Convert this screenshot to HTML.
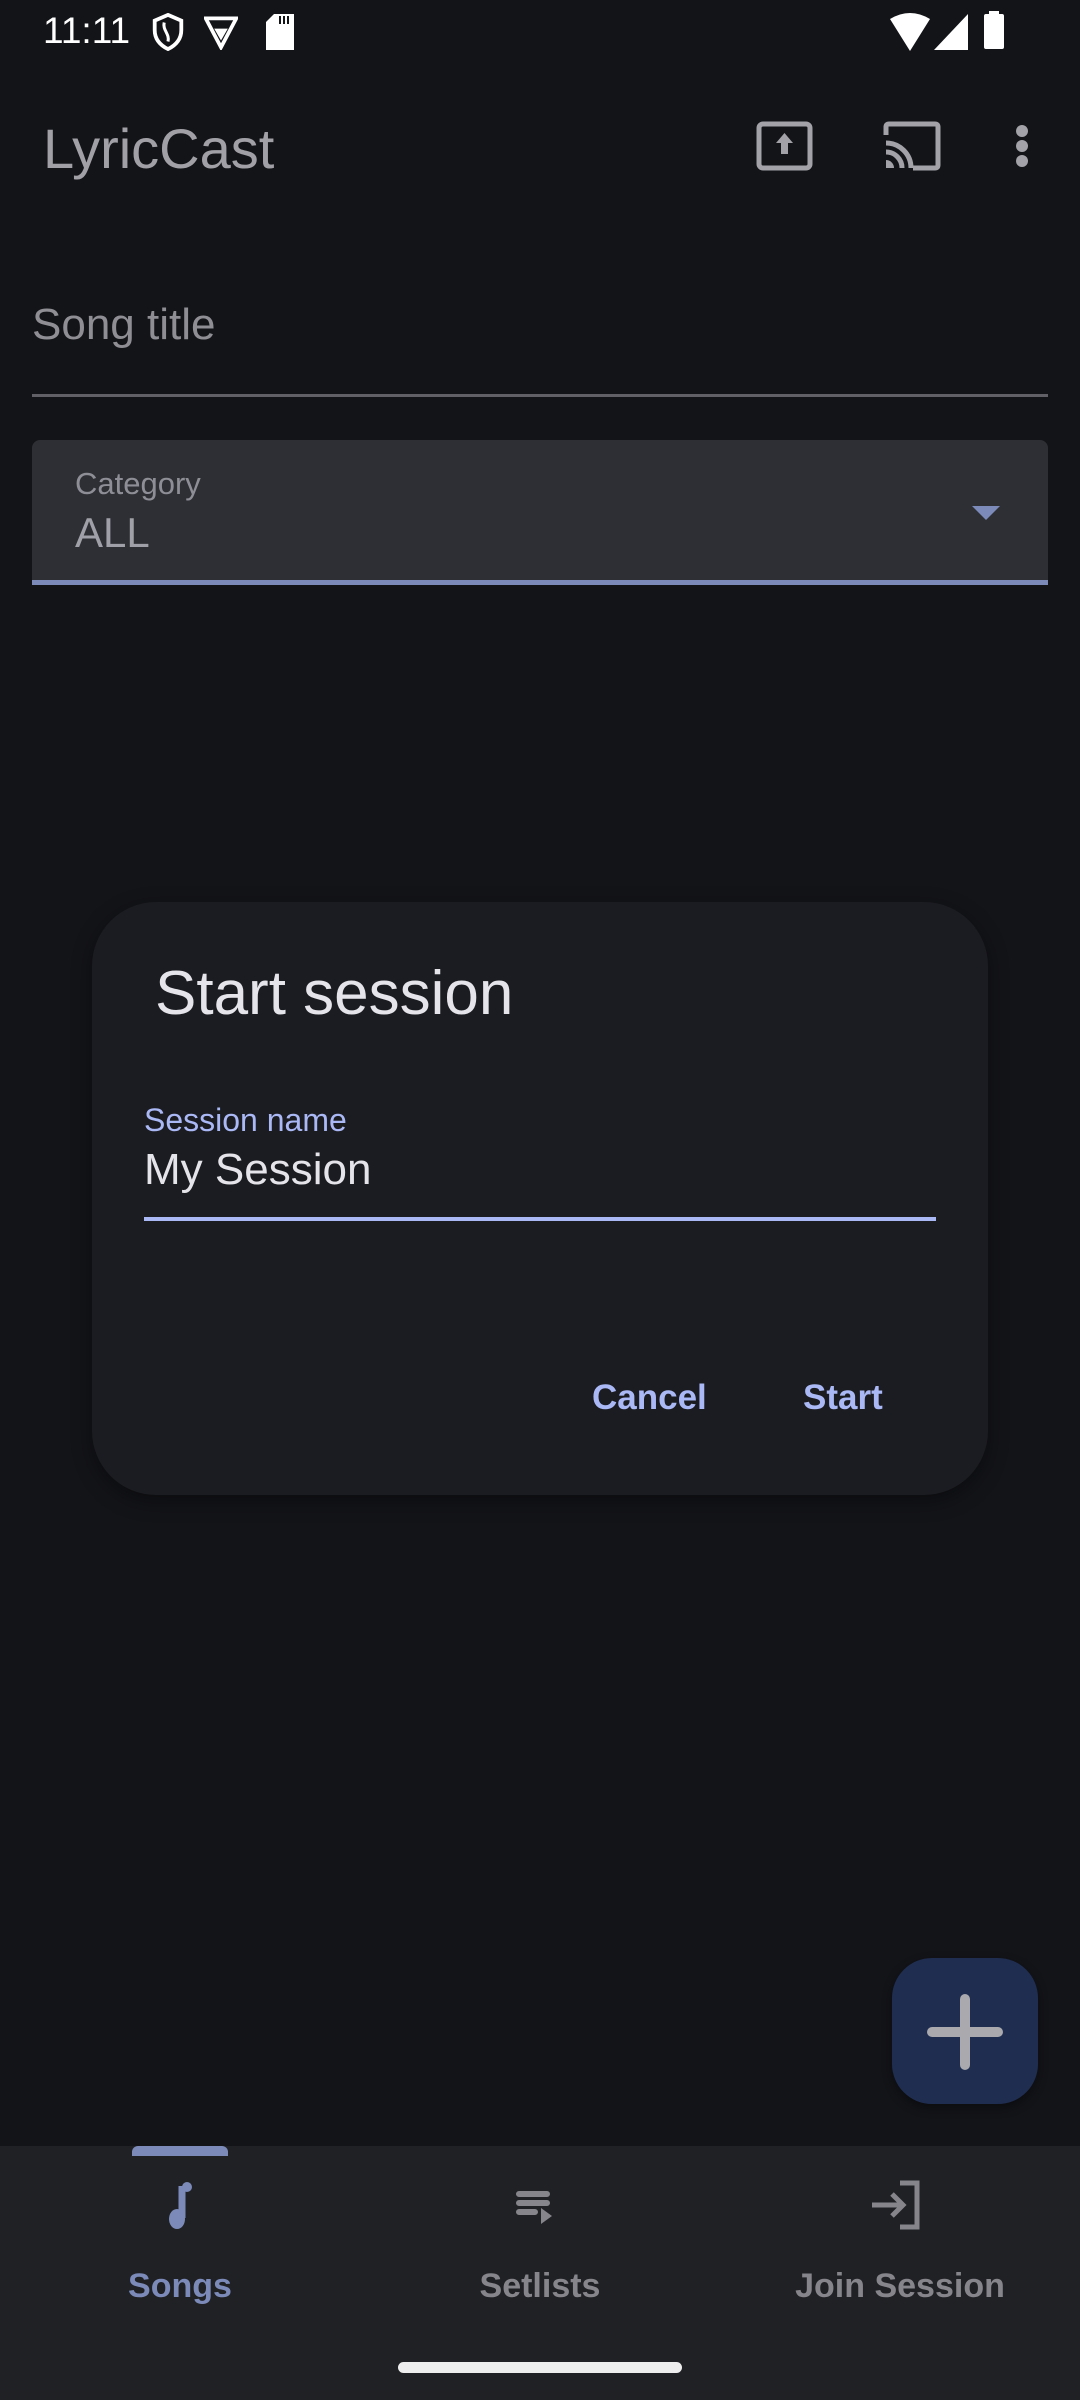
<!DOCTYPE html>
<html><head><meta charset="utf-8"><style>
*{margin:0;padding:0;box-sizing:border-box}
body{width:1080px;height:2400px;background:#131418;position:relative;overflow:hidden;font-family:"Liberation Sans",sans-serif}
.a{position:absolute;white-space:nowrap}
</style></head><body>
<div class="a" style="left:43px;top:10px;font-size:37px;color:#fff;line-height:42px">11:11</div>
<svg class="a" style="left:148px;top:13px" width="40" height="38" viewBox="0 0 20 20"><path d="M10 1 L17 4 V9 C17 14 14 17 10 19 C6 17 3 14 3 9 V4 Z" fill="none" stroke="#fff" stroke-width="2"/><path d="M8 5 C7 9 11 11 10 15" fill="none" stroke="#fff" stroke-width="1.6"/></svg>
<svg class="a" style="left:204px;top:14px" width="34" height="36" viewBox="0 0 20 20"><path d="M1 2 H19 L10 19 Z" fill="none" stroke="#fff" stroke-width="2.2"/><path d="M6 8 H14 L10 15Z" fill="#fff"/></svg>
<svg class="a" style="left:266px;top:14px" width="28" height="36" viewBox="0 0 14 18"><path d="M4 0 H14 V18 H0 V4 Z" fill="#fff"/><path d="M7 1v4M9 1v4M11 1v4" stroke="#131418" stroke-width="1"/></svg>
<svg class="a" style="left:890px;top:13px" width="40" height="38" viewBox="0 0 20 19"><path d="M0 3 Q10 -3 20 3 L10 19 Z" fill="#fff"/></svg>
<svg class="a" style="left:934px;top:14px" width="34" height="36" viewBox="0 0 17 18"><path d="M17 0 V18 H0 Z" fill="#fff"/></svg>
<div class="a" style="left:984px;top:14px;width:20px;height:35px;background:#fff;border-radius:2px"></div>
<div class="a" style="left:989px;top:11px;width:10px;height:5px;background:#fff"></div>
<div class="a" style="left:43px;top:117px;font-size:56px;color:#a0a0a6;line-height:64px">LyricCast</div>
<svg class="a" style="left:756px;top:121px" width="57" height="50" viewBox="0 0 57 50"><rect x="3" y="3" width="51" height="44" rx="4" fill="none" stroke="#a2a2a8" stroke-width="5"/><path d="M28.5 12 L20 22 H25 V33 H32 V22 H37 Z" fill="#a2a2a8"/></svg>
<svg class="a" style="left:883px;top:121px" width="58" height="50" viewBox="0 0 58 50"><path d="M3 14 V6 Q3 3 6 3 H52 Q55 3 55 6 V44 Q55 47 52 47 H30" fill="none" stroke="#a2a2a8" stroke-width="5"/><path d="M3 22 A25 25 0 0 1 28 47 M3 31 A16 16 0 0 1 19 47" fill="none" stroke="#a2a2a8" stroke-width="5"/><path d="M3 39 A8 8 0 0 1 11 47 H3 Z" fill="#a2a2a8"/></svg>
<div class="a" style="left:1016px;top:125px;width:12px;height:12px;border-radius:6px;background:#a2a2a8"></div>
<div class="a" style="left:1016px;top:140px;width:12px;height:12px;border-radius:6px;background:#a2a2a8"></div>
<div class="a" style="left:1016px;top:155px;width:12px;height:12px;border-radius:6px;background:#a2a2a8"></div>
<div class="a" style="left:32px;top:300px;font-size:44px;color:#8e8e94;line-height:50px">Song title</div>
<div class="a" style="left:32px;top:394px;width:1016px;height:3px;background:#606066"></div>
<div class="a" style="left:32px;top:440px;width:1016px;height:145px;background:#2e2f35;border-radius:8px 8px 0 0"></div>
<div class="a" style="left:32px;top:580px;width:1016px;height:5px;background:#7b8ab8"></div>
<div class="a" style="left:75px;top:466px;font-size:31px;color:#8e8e96;line-height:36px">Category</div>
<div class="a" style="left:75px;top:509px;font-size:42px;color:#a0a0a8;line-height:48px">ALL</div>
<svg class="a" style="left:972px;top:506px" width="28" height="14" viewBox="0 0 28 14"><path d="M0 0H28L14 14Z" fill="#7b8ab8"/></svg>
<div class="a" style="left:92px;top:902px;width:896px;height:593px;background:#1b1c21;border-radius:64px;box-shadow:0 6px 20px rgba(0,0,0,.4)"></div>
<div class="a" style="left:155px;top:958px;font-size:62px;color:#e4e4ea;line-height:72px">Start session</div>
<div class="a" style="left:144px;top:1102px;font-size:32px;color:#aab8f5;line-height:36px">Session name</div>
<div class="a" style="left:144px;top:1144px;font-size:44px;color:#e4e4ea;line-height:52px">My Session</div>
<div class="a" style="left:144px;top:1217px;width:792px;height:4px;background:#aab8f5"></div>
<div class="a" style="left:592px;top:1378px;font-size:35px;font-weight:bold;color:#aab8f5;line-height:40px">Cancel</div>
<div class="a" style="left:803px;top:1378px;font-size:35px;font-weight:bold;color:#aab8f5;line-height:40px">Start</div>
<div class="a" style="left:892px;top:1958px;width:146px;height:146px;background:#1f2d50;border-radius:40px;box-shadow:0 4px 10px rgba(0,0,0,.4)"></div>
<div class="a" style="left:960px;top:1994px;width:10px;height:76px;background:#a9a9ae;border-radius:5px"></div>
<div class="a" style="left:927px;top:2027px;width:76px;height:10px;background:#a9a9ae;border-radius:5px"></div>
<div class="a" style="left:0;top:2146px;width:1080px;height:254px;background:#202125"></div>
<div class="a" style="left:132px;top:2146px;width:96px;height:10px;background:#7b8ab8;border-radius:6px 6px 0 0"></div>
<svg class="a" style="left:160px;top:2180px" width="40" height="50" viewBox="0 0 40 50"><path d="M22 6 V38" stroke="#7b8ab8" stroke-width="7"/><circle cx="27" cy="7" r="5" fill="#7b8ab8"/><ellipse cx="17" cy="39" rx="8" ry="10" fill="#7b8ab8"/></svg>
<svg class="a" style="left:515px;top:2190px" width="44" height="40" viewBox="0 0 44 40"><path d="M4 4H32M4 13H32M4 22H20" stroke="#85858b" stroke-width="6" stroke-linecap="round"/><path d="M26 18 L37 26 L26 34Z" fill="#85858b"/></svg>
<svg class="a" style="left:870px;top:2180px" width="56" height="50" viewBox="0 0 56 50"><path d="M30 3 H47 V47 H30" fill="none" stroke="#85858b" stroke-width="5"/><path d="M2 25 H32 M22 14 L33 25 L22 36" fill="none" stroke="#85858b" stroke-width="5"/></svg>
<div class="a" style="left:80px;top:2266px;width:200px;text-align:center;font-size:34px;font-weight:bold;color:#7b8ab8;line-height:40px">Songs</div>
<div class="a" style="left:440px;top:2266px;width:200px;text-align:center;font-size:34px;font-weight:bold;color:#85858b;line-height:40px">Setlists</div>
<div class="a" style="left:760px;top:2266px;width:280px;text-align:center;font-size:34px;font-weight:bold;color:#85858b;line-height:40px">Join Session</div>
<div class="a" style="left:398px;top:2362px;width:284px;height:11px;background:#eee;border-radius:6px"></div>
</body></html>
